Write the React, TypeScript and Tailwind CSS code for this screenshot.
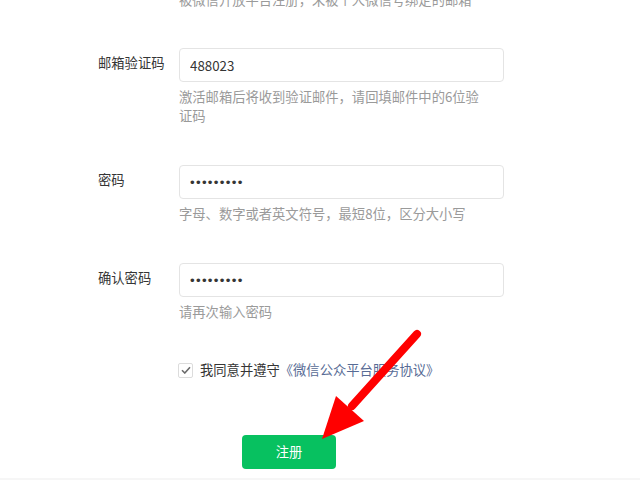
const cjk = "font-['Noto_Sans_CJK_SC','Noto_Sans',sans-serif]";

function Field({
  label,
  value,
  password,
  hint,
  className,
}: {
  label: string;
  value: string;
  password?: boolean;
  hint: string;
  className?: string;
}) {
  return (
    <div className={`flex ${className ?? ""}`}>
      <label className="w-[81px] shrink-0 leading-[30px] text-[13.3px] text-[#353535]">
        {label}
      </label>
      <div className="w-[325px]">
        <input
          readOnly
          type={password ? "password" : "text"}
          defaultValue={value}
          className={`w-full h-[34px] rounded-[4px] border border-[#e4e4e4] px-[10px] text-[13.3px] text-[#353535] outline-none bg-white ${
            password ? "font-['Liberation_Sans',sans-serif] tracking-[1.3px]" : cjk
          }`}
        />
        <p className="mt-[5px] w-[312px] leading-[19px] text-[13.3px] text-[#9a9a9a]">
          {hint}
        </p>
      </div>
    </div>
  );
}

export default function App() {
  return (
    <div className={`relative flex flex-col w-[640px] h-[480px] overflow-hidden bg-white ${cjk}`}>
      <div className="pl-[98px]">
        {/* previous field's hint, scrolled off the top */}
        <p className="-mt-[10px] ml-[81px] leading-[20px] text-[13.3px] text-[#9a9a9a]">
          被微信开放平台注册，未被个人微信号绑定的邮箱
        </p>

        <Field
          className="mt-[38px]"
          label="邮箱验证码"
          value="488023"
          hint="激活邮箱后将收到验证邮件，请回填邮件中的6位验证码"
        />
        <Field
          className="mt-[40px]"
          label="密码"
          value="123456789"
          password
          hint="字母、数字或者英文符号，最短8位，区分大小写"
        />
        <Field
          className="mt-[40px]"
          label="确认密码"
          value="123456789"
          password
          hint="请再次输入密码"
        />

        <div className="mt-[39px] ml-[80px] flex items-center h-[20px] text-[13.3px]">
          <span className="flex items-center justify-center w-[15px] h-[15px] border border-[#dcdcdc] rounded-[2px] bg-white">
            <svg width="10" height="8" viewBox="0 0 10 8" fill="none">
              <path d="M1 4.2 3.8 7 9 1.2" stroke="#6b6b6b" strokeWidth="1.6" />
            </svg>
          </span>
          <span className="ml-[7px] text-[#353535]">我同意并遵守</span>
          <span className="text-[#576b95]">《微信公众平台服务协议》</span>
        </div>

        <button className="mt-[55px] ml-[144px] w-[94px] h-[34px] rounded-[4px] bg-[#07c160] text-white text-[13.3px]">
          注册
        </button>
      </div>

      <div className="mt-auto h-[2px] bg-[#f6f6f6]" />

      {/* red annotation arrow */}
      <svg
        className="absolute inset-0 pointer-events-none"
        width="640"
        height="480"
        viewBox="0 0 640 480"
      >
        <line x1="417" y1="334" x2="352" y2="406" stroke="#ff0000" strokeWidth="8" strokeLinecap="round" />
        <polygon points="336,396 364,421 322,439" fill="#ff0000" />
      </svg>
    </div>
  );
}
